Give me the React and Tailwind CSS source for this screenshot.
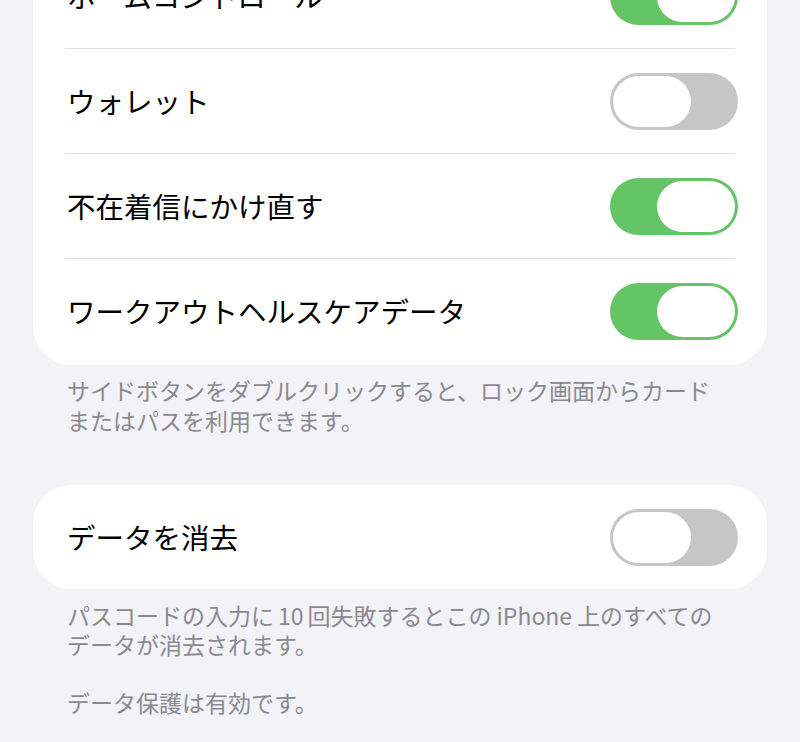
import React from 'react'

const font = { fontFamily: '"Noto Sans CJK JP", "Noto Sans", sans-serif' }

function Toggle({ on }) {
  return (
    <div
      className={`flex w-[128px] h-[57px] shrink-0 rounded-full p-[3px] ${
        on ? 'bg-[#65c466] justify-end' : 'bg-[#c6c6c6] justify-start'
      }`}
    >
      <div className="w-[78px] h-[51px] rounded-full bg-white" />
    </div>
  )
}

function Row({ label, on, last, tall }) {
  return (
    <div>
      <div
        className={`flex items-center justify-between pl-[34px] pr-[29px] ${
          tall ? 'h-[106px] pb-[2px]' : 'h-[104px]'
        }`}
      >
        <span className="text-[28.5px] leading-none text-black">{label}</span>
        <Toggle on={on} />
      </div>
      {!last && <div className="mx-[32px] h-px bg-[#dedee2]" />}
    </div>
  )
}

export default function App() {
  return (
    <div className="w-[800px] h-[742px] overflow-hidden bg-[#f2f2f7]" style={font}>
      <div className="mx-[33px] -mt-[56px] bg-white rounded-[38px] overflow-hidden">
        <Row label="ホームコントロール" on />
        <Row label="ウォレット" on={false} />
        <Row label="不在着信にかけ直す" on />
        <Row label="ワークアウトヘルスケアデータ" on last tall />
      </div>
      <p className="pl-[67px] pr-[40px] pt-[10px] text-[23px] leading-[30px] text-[#8a8a8e]">
        サイドボタンをダブルクリックすると、ロック画面からカード
        <br />
        またはパスを利用できます。
      </p>

      <div className="mx-[33px] mt-[50px] bg-white rounded-[38px]">
        <Row label="データを消去" on={false} last />
      </div>
      <div className="pl-[67px] pr-[30px] pt-[12px] text-[23px] leading-[29px] text-[#8a8a8e]">
        <p>
          パスコードの入力に<span className="mx-[4px]">10</span>回失敗するとこの
          <span className="mx-[5px]">iPhone</span>上のすべての
          <br />
          データが消去されます。
        </p>
        <p className="mt-[29px]">データ保護は有効です。</p>
      </div>
    </div>
  )
}
